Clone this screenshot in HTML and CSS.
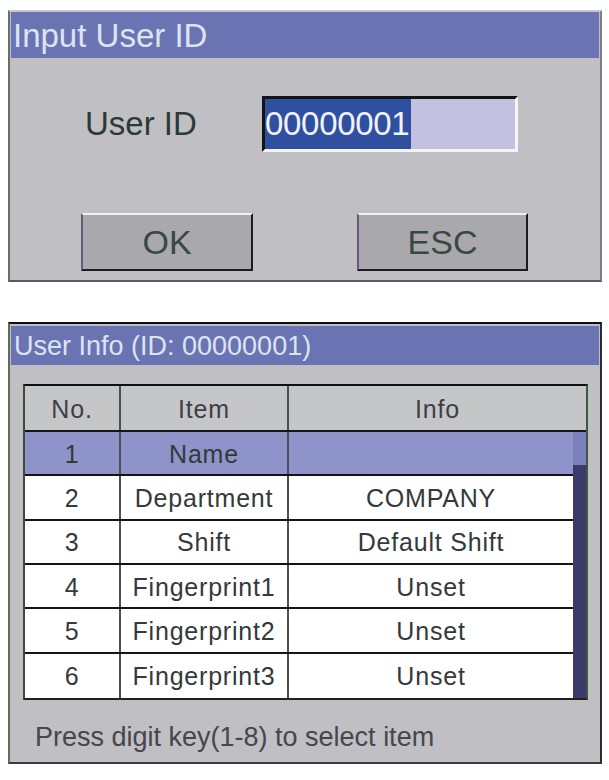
FILE: index.html
```html
<!DOCTYPE html>
<html lang="en">
  <head>
    <meta charset="UTF-8" />
    <title>User ID</title>
    <link rel="stylesheet" href="styles.css">
  </head>
  <body>
    <main class="screen">
      <section class="dialog dialogInput">
        <header class="dialogTitle">Input User ID</header>
        <div class="dialogBody">
          <div class="fieldRow">
            <label class="fieldLabel" for="userId">User ID</label>
            <div class="idField" id="userId">
              <span class="idValue">00000001</span>
            </div>
          </div>
          <div class="btnRow">
            <button class="dlgBtn btnOk">OK</button>
            <button class="dlgBtn btnEsc">ESC</button>
          </div>
        </div>
      </section>

      <section class="dialog dialogInfo">
        <header class="dialogTitle small">User Info (ID: 00000001)</header>
        <div class="infoTable">
          <div class="tableHead">
            <div class="cell">No.</div>
            <div class="cell">Item</div>
            <div class="cell">Info</div>
          </div>
          <div class="tableBody">
            <div class="rows">
              <div class="row selected">
                <div class="cell">1</div>
                <div class="cell">Name</div>
                <div class="cell"></div>
              </div>
              <div class="row">
                <div class="cell">2</div>
                <div class="cell">Department</div>
                <div class="cell">COMPANY</div>
              </div>
              <div class="row">
                <div class="cell">3</div>
                <div class="cell">Shift</div>
                <div class="cell">Default Shift</div>
              </div>
              <div class="row">
                <div class="cell">4</div>
                <div class="cell">Fingerprint1</div>
                <div class="cell">Unset</div>
              </div>
              <div class="row">
                <div class="cell">5</div>
                <div class="cell">Fingerprint2</div>
                <div class="cell">Unset</div>
              </div>
              <div class="row">
                <div class="cell">6</div>
                <div class="cell">Fingerprint3</div>
                <div class="cell">Unset</div>
              </div>
            </div>
            <div class="scrollbar"><div class="scrollTrack"></div></div>
          </div>
        </div>
        <p class="hint">Press digit key(1-8) to select item</p>
      </section>
    </main>
  </body>
</html>
```

FILE: styles.css
```css
:root {
  --panel-bg: #c0bfc4;
  --title-bg: #6a74b3;
  --title-text: #dce3f1;
  --text-dark: #34393a;
  --line-dark: #141414;
  --select-bg: #8e93c9;
}

* {
  margin: 0;
  padding: 0;
  box-sizing: border-box;
}

body {
  background: #ffffff;
  font-family: "Liberation Sans", Arial, sans-serif;
}

.screen {
  display: flex;
  flex-direction: column;
  gap: 40px;
  padding: 10px 0 0 8px;
}

.dialog {
  width: 594px;
  background: var(--panel-bg);
  border: 2px solid;
}

.dialogInput {
  height: 272px;
  border-color: #c8c8cc #857a8c #5a5a5e #66706a;
}

.dialogInfo {
  height: 442px;
  padding-top: 2px;
  border-color: #101010 #2c2c36 #3c3c40 #5e6e56;
}

.dialogTitle {
  height: 46px;
  margin: 0 1px;
  padding: 2px 0 0 2px;
  background: var(--title-bg);
  color: var(--title-text);
  font-size: 33px;
  line-height: 44px;
  white-space: nowrap;
}

.dialogTitle.small {
  height: 39px;
  padding: 2px 0 0 3px;
  font-size: 27px;
  line-height: 37px;
}

/* input dialog */
.dialogBody {
  height: 222px;
}

.fieldRow {
  display: flex;
  align-items: center;
  height: 56px;
  margin-top: 38px;
}

.fieldLabel {
  width: 252px;
  padding-left: 75px;
  font-size: 33px;
  color: #2c3a36;
}

.idField {
  display: flex;
  width: 256px;
  height: 56px;
  border: 3px solid;
  border-color: var(--line-dark) #f4f4f4 #f4f4f4 var(--line-dark);
  background: #c2c1e1;
}

.idValue {
  width: 146px;
  background: #2f4f9f;
  color: #f2f2ff;
  font-size: 33px;
  line-height: 50px;
  letter-spacing: -0.3px;
}

.btnRow {
  display: flex;
  gap: 104px;
  margin-top: 61px;
  padding-left: 71px;
}

.dlgBtn {
  width: 172px;
  height: 58px;
  background: #a9a8ad;
  border: 2px solid;
  border-color: #f2f2f2 #1c1c1c #1c1c1c #6a5a78;
  font-family: inherit;
  font-size: 34px;
  color: #3a4842;
}

.btnEsc {
  width: 171px;
}

/* user info table */
.infoTable {
  width: 565px;
  margin: 19px 0 0 13px;
  border: 2px solid;
  border-color: #101010 #3c5a3c #202020 #3c4a3c;
  font-size: 25px;
  letter-spacing: 0.8px;
  color: var(--text-dark);
}

.tableHead,
.row {
  display: grid;
  grid-template-columns: 96px 168px 1fr;
}

.tableHead {
  height: 46px;
  background: #c5c6c8;
  border-bottom: 2px solid var(--line-dark);
  color: #3e3e48;
}

.cell {
  display: flex;
  align-items: center;
  justify-content: center;
  padding-top: 2px;
  border-right: 2px solid #4c4c54;
  white-space: nowrap;
}

.cell:last-child {
  border-right: none;
}

.tableBody {
  display: flex;
  height: 266px;
}

.rows {
  flex: 1;
  display: grid;
  grid-template-rows: repeat(6, 1fr);
}

.row {
  background: #ffffff;
  border-bottom: 2px solid var(--line-dark);
}

.row:last-child {
  border-bottom: none;
}

.row.selected {
  background: var(--select-bg);
}

.scrollbar {
  width: 13px;
  background: #3b3a6a;
}

.scrollTrack {
  height: 33px;
  background: #7c80bd;
}

.hint {
  padding: 22px 0 0 25px;
  font-size: 27px;
  color: #46464c;
  white-space: nowrap;
}
```
